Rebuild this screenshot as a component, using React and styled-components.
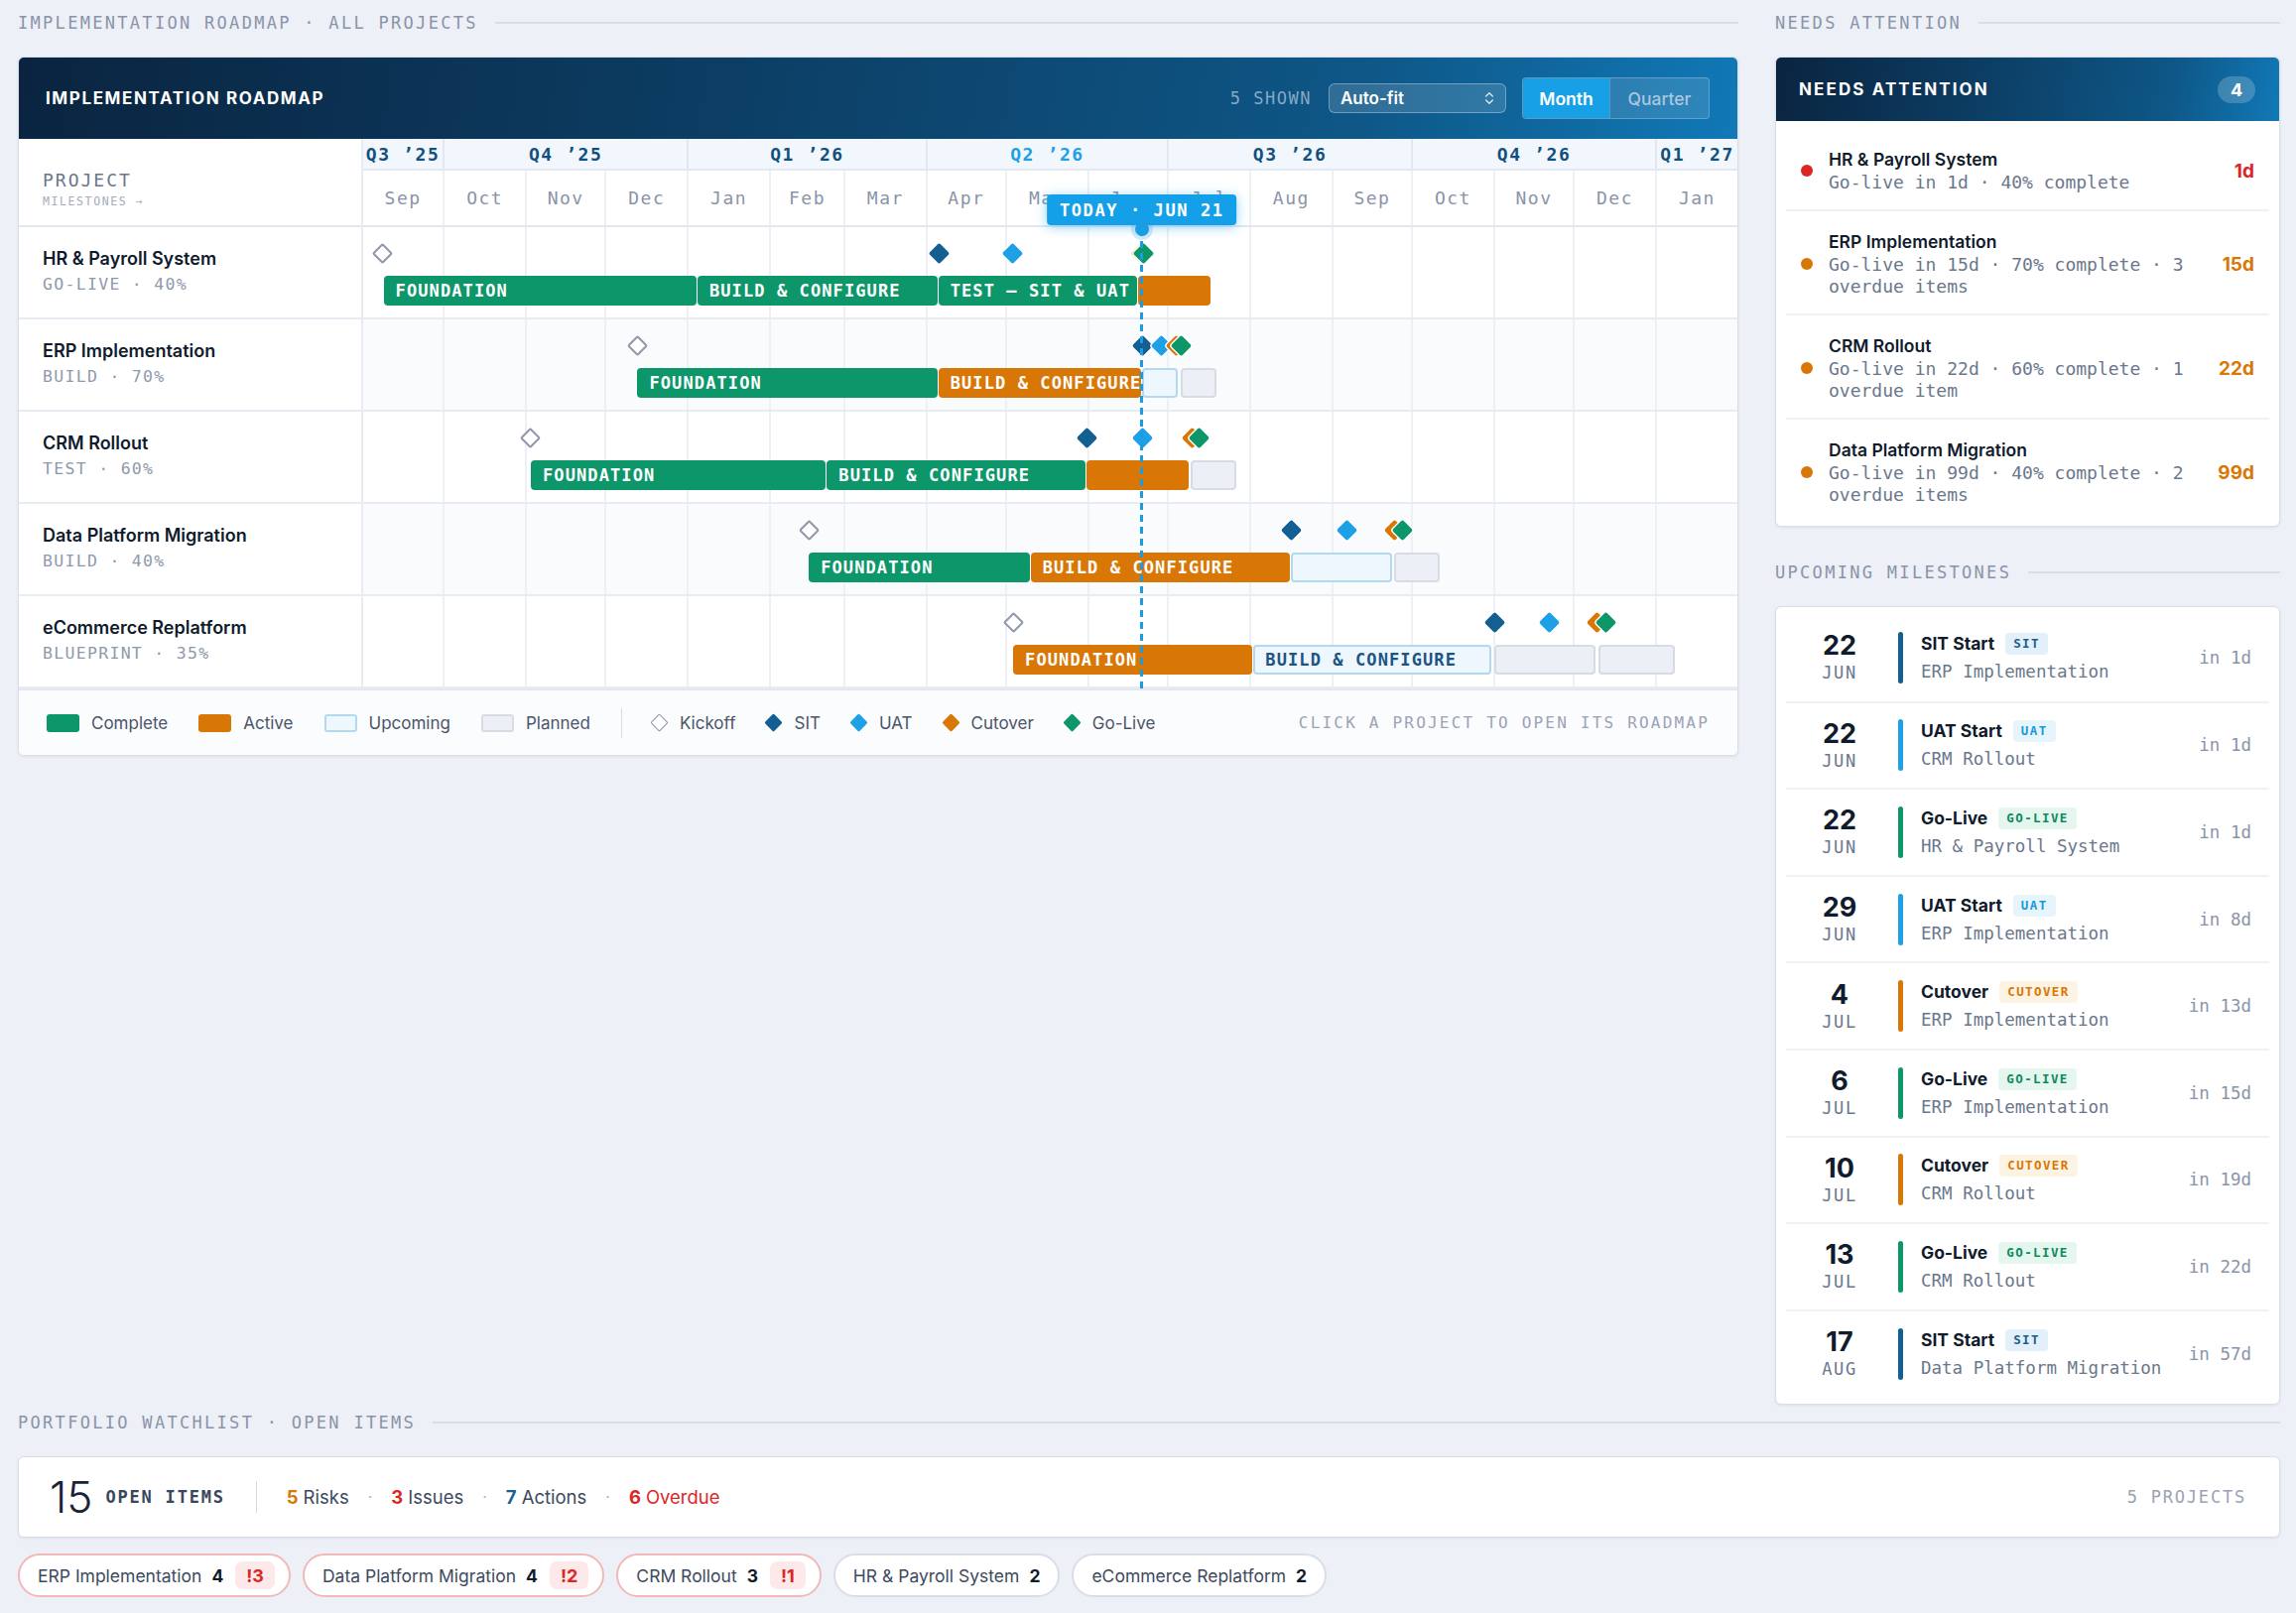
import React from 'react';
import styled, { createGlobalStyle } from 'styled-components';
import { ChevronsUpDown } from 'lucide-react';

const SANS = `Inter, "Noto Sans", "Liberation Sans", sans-serif`;
const MONO = `"DejaVu Sans Mono", "Liberation Mono", monospace`;

const GlobalStyle = createGlobalStyle`
  html, body { margin: 0; padding: 0; background: #edf0f7; }
  * { box-sizing: border-box; }
`;

const TOTAL = 518;
const TODAY = 293.5;
const pct = (d) => (d / TOTAL) * 100;

const MONTHS = [
  ['Sep', 30], ['Oct', 31], ['Nov', 30], ['Dec', 31], ['Jan', 31], ['Feb', 28], ['Mar', 31],
  ['Apr', 30], ['May', 31], ['Jun', 30], ['Jul', 31], ['Aug', 31], ['Sep', 30], ['Oct', 31],
  ['Nov', 30], ['Dec', 31], ['Jan', 31],
];
const QUARTERS = [
  ['Q3 ’25', 30], ['Q4 ’25', 92], ['Q1 ’26', 90], ['Q2 ’26', 91, true],
  ['Q3 ’26', 92], ['Q4 ’26', 92], ['Q1 ’27', 31],
];

const MS_COLOR = { sit: '#135f91', uat: '#1ea0e6', cutover: '#d97706', golive: '#0d9669' };

const PROJECTS = [
  {
    name: 'HR & Payroll System', sub: 'GO-LIVE · 40%', kickoff: 7.3,
    bars: [[7.7, 126, 'complete', 'Foundation'], [126, 216.8, 'complete', 'Build & Configure'],
      [216.8, 292, 'complete', 'Test — SIT & UAT'], [292, 319.6, 'active', '']],
    ms: [['sit', 217.2], ['uat', 244.8], ['cutover', 293.4], ['golive', 294]],
  },
  {
    name: 'ERP Implementation', sub: 'BUILD · 70%', kickoff: 103.4,
    bars: [[103.4, 216.8, 'complete', 'Foundation'], [216.8, 293.5, 'active', 'Build & Configure'],
      [293.5, 307.6, 'upcoming', ''], [308, 322.2, 'planned', '']],
    ms: [['sit', 293.7], ['uat', 300.8], ['cutover', 306.4], ['golive', 308.2]],
  },
  {
    name: 'CRM Rollout', sub: 'TEST · 60%', kickoff: 63.2,
    bars: [[63.2, 174.8, 'complete', 'Foundation'], [174.8, 272.6, 'complete', 'Build & Configure'],
      [272.6, 311.6, 'active', ''], [312, 329.4, 'planned', '']],
    ms: [['sit', 272.8], ['uat', 293.8], ['cutover', 312.3], ['golive', 315]],
  },
  {
    name: 'Data Platform Migration', sub: 'BUILD · 40%', kickoff: 168,
    bars: [[168, 251.6, 'complete', 'Foundation'], [251.6, 349.6, 'active', 'Build & Configure'],
      [349.8, 388.2, 'upcoming', ''], [388.6, 406.2, 'planned', '']],
    ms: [['sit', 350], ['uat', 370.8], ['cutover', 388.6], ['golive', 391.6]],
  },
  {
    name: 'eCommerce Replatform', sub: 'BLUEPRINT · 35%', kickoff: 245,
    bars: [[245, 335.6, 'active', 'Foundation'], [335.6, 425.8, 'upcoming', 'Build & Configure'],
      [426.4, 465, 'planned', ''], [465.6, 494.8, 'planned', '']],
    ms: [['sit', 426.4], ['uat', 447.2], ['cutover', 465], ['golive', 468.4]],
  },
];

const ATTENTION = [
  { name: 'HR & Payroll System', sub: 'Go-live in 1d · 40% complete', days: '1d', tone: '#dc2626' },
  { name: 'ERP Implementation', sub: 'Go-live in 15d · 70% complete · 3 overdue items', days: '15d', tone: '#d97706' },
  { name: 'CRM Rollout', sub: 'Go-live in 22d · 60% complete · 1 overdue item', days: '22d', tone: '#d97706' },
  { name: 'Data Platform Migration', sub: 'Go-live in 99d · 40% complete · 2 overdue items', days: '99d', tone: '#d97706' },
];

const UPCOMING = [
  ['22', 'JUN', 'SIT Start', 'sit', 'ERP Implementation', 'in 1d'],
  ['22', 'JUN', 'UAT Start', 'uat', 'CRM Rollout', 'in 1d'],
  ['22', 'JUN', 'Go-Live', 'golive', 'HR & Payroll System', 'in 1d'],
  ['29', 'JUN', 'UAT Start', 'uat', 'ERP Implementation', 'in 8d'],
  ['4', 'JUL', 'Cutover', 'cutover', 'ERP Implementation', 'in 13d'],
  ['6', 'JUL', 'Go-Live', 'golive', 'ERP Implementation', 'in 15d'],
  ['10', 'JUL', 'Cutover', 'cutover', 'CRM Rollout', 'in 19d'],
  ['13', 'JUL', 'Go-Live', 'golive', 'CRM Rollout', 'in 22d'],
  ['17', 'AUG', 'SIT Start', 'sit', 'Data Platform Migration', 'in 57d'],
];

const TAGS = {
  sit: { label: 'SIT', bg: '#e3f0fa', fg: '#17608f' },
  uat: { label: 'UAT', bg: '#e6f4fc', fg: '#1a9ad9' },
  golive: { label: 'GO-LIVE', bg: '#e4f6ee', fg: '#0d8a5f' },
  cutover: { label: 'CUTOVER', bg: '#fdf3e2', fg: '#d97706' },
};

const CHIPS = [
  ['ERP Implementation', 4, 3], ['Data Platform Migration', 4, 2], ['CRM Rollout', 3, 1],
  ['HR & Payroll System', 2, 0], ['eCommerce Replatform', 2, 0],
];

/* ---------- page shell ---------- */

const Page = styled.div`
  width: 2314px;
  min-height: 1626px;
  padding: 5px 16px 15px 18px;
  font-family: ${SANS};
  color: #0f1b2d;
`;

const TopGrid = styled.div`
  display: grid;
  grid-template-columns: 1fr 509px;
  column-gap: 37px;
  align-items: start;
`;

const Column = styled.div`
  display: flex;
  flex-direction: column;
`;

const SectionHead = styled.div`
  display: flex;
  align-items: center;
  gap: 17px;
  height: 36px;
  margin: ${p => p.$top || 0}px 0 16px;
  font-family: ${MONO};
  font-size: 17px;
  letter-spacing: 2.3px;
  color: #8a94a8;
  white-space: nowrap;
  &::after {
    content: '';
    flex: 1;
    height: 2px;
    background: #d8dde7;
  }
`;

const Card = styled.div`
  background: #fff;
  border: 1px solid #d9dee8;
  border-radius: 6px;
  box-shadow: 0 1px 3px rgba(16, 32, 60, 0.08);
  overflow: hidden;
`;

const DarkHeader = styled.div`
  display: flex;
  align-items: center;
  justify-content: space-between;
  height: ${p => p.$h}px;
  padding: ${p => p.$pad};
  background: linear-gradient(100deg, #0a2440 0%, #0c3d63 40%, #0e5787 78%, #1179b7 100%);
  color: #fff;
`;

const HeaderTitle = styled.div`
  font-weight: 700;
  font-size: 17px;
  letter-spacing: ${p => p.$ls || 1.6}px;
`;

/* ---------- roadmap header controls ---------- */

const Controls = styled.div`
  display: flex;
  align-items: center;
`;

const ShownCount = styled.span`
  font-family: ${MONO};
  font-size: 17px;
  letter-spacing: 1.5px;
  color: #86a9c7;
  margin-right: 17px;
`;

const Select = styled.div`
  width: 179px;
  height: 30px;
  display: flex;
  align-items: center;
  justify-content: space-between;
  padding: 0 8px 0 11px;
  border: 1px solid rgba(190, 215, 240, 0.45);
  border-radius: 6px;
  background: rgba(255, 255, 255, 0.14);
  font-size: 17px;
  font-weight: 600;
  color: #fff;
  margin-right: 16px;
`;

const Segmented = styled.div`
  display: flex;
  height: 42px;
  border: 1px solid rgba(190, 215, 240, 0.35);
  border-radius: 4px;
  overflow: hidden;
  background: rgba(255, 255, 255, 0.12);
`;

const SegButton = styled.div`
  display: flex;
  align-items: center;
  justify-content: center;
  width: ${p => p.$w}px;
  font-size: 17.5px;
  font-weight: ${p => (p.$active ? 600 : 500)};
  color: ${p => (p.$active ? '#fff' : '#a9c7df')};
  background: ${p => (p.$active ? '#18a0e6' : 'transparent')};
  & + & { border-left: 1px solid rgba(190, 215, 240, 0.3); }
`;

/* ---------- chart ---------- */

const Chart = styled.div`
  display: flex;
`;

const LabelCol = styled.div`
  width: 347px;
  flex: none;
  border-right: 2px solid #e8ebf2;
`;

const LabelHead = styled.div`
  height: 89px;
  border-bottom: 2px solid #e3e7ef;
  padding: 14px 0 0 24px;
  display: flex;
  flex-direction: column;
  justify-content: center;
  gap: 4px;
`;

const LabelHeadMain = styled.div`
  font-family: ${MONO};
  font-size: 18px;
  letter-spacing: 2px;
  color: #6b778c;
  font-weight: 500;
`;

const LabelHeadSub = styled.div`
  font-family: ${MONO};
  font-size: 11.5px;
  letter-spacing: 1.6px;
  color: #a3acbc;
`;

const ProjectLabel = styled.div`
  height: 93px;
  border-bottom: 2px solid #e8ebf2;
  padding: 19px 0 0 24px;
  cursor: pointer;
`;

const ProjectName = styled.div`
  font-size: 18px;
  font-weight: 600;
  color: #101b2c;
  line-height: 26px;
`;

const ProjectSub = styled.div`
  font-family: ${MONO};
  font-size: 16.5px;
  letter-spacing: 1.3px;
  color: #8f99ab;
  line-height: 26px;
`;

const TimelineCol = styled.div`
  flex: 1;
  position: relative;
`;

const QuarterRow = styled.div`
  display: flex;
  height: 32px;
  background: #f1f7fd;
  border-bottom: 2px solid #e3e7ef;
`;

const QuarterCell = styled.div`
  flex: 0 0 ${p => pct(p.$days)}%;
  display: flex;
  align-items: center;
  justify-content: center;
  border-left: ${p => (p.$first ? 'none' : '2px solid #e3e8f0')};
  font-family: ${MONO};
  font-size: 18px;
  font-weight: 600;
  letter-spacing: 1.6px;
  color: ${p => (p.$current ? '#1ea0e6' : '#11507d')};
  white-space: nowrap;
`;

const MonthRow = styled.div`
  display: flex;
  height: 57px;
  border-bottom: 2px solid #e3e7ef;
`;

const MonthCell = styled.div`
  flex: 0 0 ${p => pct(p.$days)}%;
  display: flex;
  align-items: center;
  justify-content: center;
  border-left: ${p => (p.$first ? 'none' : '2px solid #edf0f5')};
  font-family: ${MONO};
  font-size: 18px;
  letter-spacing: 1.5px;
  color: #8a94a8;
`;

const Track = styled.div`
  position: relative;
  height: 93px;
  border-bottom: 2px solid #e8ebf2;
  background: ${p => (p.$alt ? '#f9fbfd' : '#fff')};
`;

const GridLayer = styled.div`
  position: absolute;
  inset: 0;
  display: flex;
`;

const GridCell = styled.div`
  flex: 0 0 ${p => pct(p.$days)}%;
  border-left: ${p => (p.$first ? 'none' : '2px solid #edf0f5')};
`;

const BAR_STYLES = {
  complete: 'background:#0d9669; color:#fff;',
  active: 'background:#d97706; color:#fff;',
  upcoming: 'background:#eef7fd; border:2px solid #b3d9ef; color:#1b5485;',
  planned: 'background:#eceff6; border:2px solid #d6dbe5; color:#6b778c;',
};

const Bar = styled.div`
  position: absolute;
  top: 49px;
  height: 30px;
  border-radius: 4px;
  display: flex;
  align-items: center;
  padding-left: ${p => (p.$kind === 'upcoming' ? 10 : 12)}px;
  overflow: hidden;
  white-space: nowrap;
  font-family: ${MONO};
  font-size: 17px;
  font-weight: 600;
  letter-spacing: 1.1px;
  text-transform: uppercase;
  ${p => BAR_STYLES[p.$kind]}
`;

const Diamond = styled.div`
  position: absolute;
  top: 19px;
  width: 15px;
  height: 15px;
  margin-left: -7.5px;
  transform: rotate(45deg);
  border-radius: 2px;
  background: ${p => (p.$kind === 'kickoff' ? '#fff' : MS_COLOR[p.$kind])};
  border: ${p => (p.$kind === 'kickoff' ? '2px solid #8f99ab' : 'none')};
  box-shadow: ${p => (p.$kind === 'kickoff' ? 'none' : '0 0 0 1.5px rgba(255,255,255,0.95)')};
  z-index: 2;
`;

const TodayLine = styled.div`
  position: absolute;
  top: 91px;
  bottom: 0;
  width: 3px;
  margin-left: -1.5px;
  background: repeating-linear-gradient(to bottom, #1b9be0 0 7px, transparent 7px 12px);
  z-index: 3;
  pointer-events: none;
`;

const TodayBadge = styled.div`
  position: absolute;
  top: 56px;
  transform: translateX(-50%);
  height: 31px;
  padding: 0 13px;
  display: flex;
  align-items: center;
  border-radius: 4px;
  background: #14a0e8;
  color: #fff;
  font-family: ${MONO};
  font-size: 17px;
  font-weight: 700;
  letter-spacing: 1.6px;
  white-space: nowrap;
  box-shadow: 0 2px 12px rgba(20, 160, 232, 0.45);
  z-index: 5;
`;

const TodayDot = styled.div`
  position: absolute;
  top: 84px;
  width: 14px;
  height: 14px;
  margin-left: -7px;
  border-radius: 50%;
  background: #1b9de3;
  box-shadow: 0 0 0 4px rgba(27, 157, 227, 0.2);
  z-index: 5;
`;

/* ---------- legend ---------- */

const Legend = styled.div`
  display: flex;
  align-items: center;
  height: 67px;
  padding: 0 28px;
  border-top: 2px solid #e3e7ef;
  background: #fbfcfe;
  font-size: 17px;
  color: #4a5568;
`;

const LegendItem = styled.div`
  display: flex;
  align-items: center;
  gap: ${p => p.$gap || 12}px;
  margin-right: ${p => p.$mr || 31}px;
`;

const Swatch = styled.span`
  width: 33px;
  height: 18px;
  border-radius: 3px;
  ${p => BAR_STYLES[p.$kind]}
`;

const LegendDiamond = styled.span`
  width: 13px;
  height: 13px;
  margin: 0 2px;
  transform: rotate(45deg);
  border-radius: 1.5px;
  background: ${p => (p.$kind === 'kickoff' ? '#fff' : MS_COLOR[p.$kind])};
  border: ${p => (p.$kind === 'kickoff' ? '1.5px solid #8f99ab' : 'none')};
`;

const LegendDivider = styled.span`
  width: 1px;
  height: 30px;
  background: #d6dbe5;
  margin-right: 29px;
`;

const LegendHint = styled.span`
  margin-left: auto;
  font-family: ${MONO};
  font-size: 16px;
  letter-spacing: 2.2px;
  color: #9aa3b5;
`;

/* ---------- needs attention ---------- */

const CountPill = styled.div`
  min-width: 38px;
  height: 27px;
  border-radius: 14px;
  background: rgba(255, 255, 255, 0.2);
  display: flex;
  align-items: center;
  justify-content: center;
  font-size: 18px;
  font-weight: 700;
`;

const ItemList = styled.div`
  padding: ${p => p.$pad};
`;

const AttnItem = styled.div`
  display: flex;
  align-items: center;
  padding: 19px 15px 16px;
  & + & { border-top: 2px solid #eef1f6; }
`;

const Dot = styled.span`
  width: 12px;
  height: 12px;
  border-radius: 50%;
  flex: none;
  background: ${p => p.$c};
  margin-right: 16px;
`;

const AttnText = styled.div`
  flex: 1;
  min-width: 0;
  margin-right: 20px;
`;

const AttnName = styled.div`
  font-size: 17.5px;
  font-weight: 600;
  line-height: 24px;
  color: #101b2c;
`;

const AttnSub = styled.div`
  font-family: ${MONO};
  font-size: 18px;
  line-height: 22px;
  color: #6b778c;
`;

const AttnDays = styled.div`
  font-size: 19px;
  font-weight: 700;
  color: ${p => p.$c};
`;

/* ---------- upcoming milestones ---------- */

const MsItem = styled.div`
  display: flex;
  align-items: center;
  height: 87.6px;
  padding-right: 18px;
  & + & { border-top: 2px solid #eef1f6; }
`;

const DateCol = styled.div`
  width: 108px;
  flex: none;
  display: flex;
  flex-direction: column;
  align-items: center;
`;

const DayNum = styled.div`
  font-size: 27px;
  font-weight: 700;
  line-height: 31px;
  color: #101b2c;
`;

const MonthAbbr = styled.div`
  font-family: ${MONO};
  font-size: 17px;
  letter-spacing: 1.6px;
  line-height: 24px;
  color: #6b778c;
  font-weight: 500;
`;

const MsBar = styled.span`
  width: 5px;
  height: 52px;
  border-radius: 3px;
  flex: none;
  background: ${p => MS_COLOR[p.$kind]};
  margin: 0 18px 0 5px;
`;

const MsBody = styled.div`
  flex: 1;
  min-width: 0;
`;

const MsTitleRow = styled.div`
  display: flex;
  align-items: center;
  gap: 11px;
  line-height: 28px;
`;

const MsTitle = styled.span`
  font-size: 17.5px;
  font-weight: 700;
  color: #101b2c;
`;

const Tag = styled.span`
  height: 22px;
  padding: 0 8px;
  display: inline-flex;
  align-items: center;
  border-radius: 4px;
  font-family: ${MONO};
  font-size: 12.5px;
  font-weight: 700;
  letter-spacing: 1.4px;
  background: ${p => p.$bg};
  color: ${p => p.$fg};
`;

const MsProject = styled.div`
  font-family: ${MONO};
  font-size: 17.5px;
  line-height: 28px;
  color: #6b778c;
`;

const MsWhen = styled.div`
  font-family: ${MONO};
  font-size: 17.5px;
  color: #8a94a8;
  font-weight: 500;
`;

/* ---------- watchlist ---------- */

const SummaryCard = styled(Card)`
  display: flex;
  align-items: center;
  height: 82px;
  padding: 0 33px 0 31px;
`;

const BigCount = styled.span`
  font-size: 44px;
  font-weight: 300;
  color: #1a2436;
  margin-right: 13px;
`;

const OpenLabel = styled.span`
  font-family: ${MONO};
  font-size: 17px;
  font-weight: 600;
  letter-spacing: 1.8px;
  color: #3a475b;
`;

const VDivider = styled.span`
  width: 1px;
  height: 32px;
  background: #d6dbe5;
  margin: 0 30px 0 31px;
`;

const Stat = styled.span`
  font-size: 18.5px;
  color: ${p => (p.$all ? p.$c : '#3d4a5e')};
  b { font-weight: 700; color: ${p => p.$c}; margin-right: 5px; }
`;

const StatSep = styled.span`
  color: #aab2c0;
  margin: 0 19px;
`;

const ProjectsCount = styled.span`
  margin-left: auto;
  font-family: ${MONO};
  font-size: 17px;
  letter-spacing: 1.8px;
  color: #9aa3b5;
`;

const ChipRow = styled.div`
  display: flex;
  gap: 12px;
  margin-top: 16px;
`;

const Chip = styled.div`
  display: flex;
  align-items: center;
  height: 44px;
  padding: 0 ${p => (p.$hot ? 14 : 18)}px 0 18px;
  border-radius: 22px;
  background: #fff;
  border: 2px solid ${p => (p.$hot ? '#f2b8b8' : '#d9dde8')};
  font-size: 17.5px;
  color: #3d4a5e;
`;

const ChipCount = styled.b`
  margin-left: 10px;
  color: #101b2c;
  font-weight: 700;
`;

const OverdueBadge = styled.span`
  margin-left: 12px;
  height: 28px;
  padding: 0 11px;
  display: inline-flex;
  align-items: center;
  border-radius: 7px;
  background: #fde9e9;
  color: #dc2626;
  font-weight: 700;
  font-size: 18px;
`;

function MonthGrid() {
  return (
    <GridLayer>
      {MONTHS.map(([m, d], i) => <GridCell key={i} $days={d} $first={i === 0} />)}
    </GridLayer>
  );
}

function RoadmapCard() {
  return (
    <Card>
      <DarkHeader $h={82} $pad="0 28px 0 27px">
        <HeaderTitle>IMPLEMENTATION ROADMAP</HeaderTitle>
        <Controls>
          <ShownCount>5 SHOWN</ShownCount>
          <Select>
            Auto-fit
            <ChevronsUpDown size={16} color="#dbe8f4" strokeWidth={2} />
          </Select>
          <Segmented>
            <SegButton $active $w={87}>Month</SegButton>
            <SegButton $w={100}>Quarter</SegButton>
          </Segmented>
        </Controls>
      </DarkHeader>
      <Chart>
        <LabelCol>
          <LabelHead>
            <LabelHeadMain>PROJECT</LabelHeadMain>
            <LabelHeadSub>MILESTONES →</LabelHeadSub>
          </LabelHead>
          {PROJECTS.map(p => (
            <ProjectLabel key={p.name}>
              <ProjectName>{p.name}</ProjectName>
              <ProjectSub>{p.sub}</ProjectSub>
            </ProjectLabel>
          ))}
        </LabelCol>
        <TimelineCol>
          <QuarterRow>
            {QUARTERS.map(([q, d, cur], i) => (
              <QuarterCell key={q} $days={d} $current={cur} $first={i === 0}>{q}</QuarterCell>
            ))}
          </QuarterRow>
          <MonthRow>
            {MONTHS.map(([m, d], i) => (
              <MonthCell key={i} $days={d} $first={i === 0}>{m}</MonthCell>
            ))}
          </MonthRow>
          {PROJECTS.map((p, ri) => (
            <Track key={p.name} $alt={ri % 2 === 1}>
              <MonthGrid />
              <Diamond $kind="kickoff" style={{ left: `${pct(p.kickoff)}%` }} />
              {p.bars.map(([s, e, kind, label], i) => (
                <Bar key={i} $kind={kind} style={{ left: `${pct(s)}%`, width: `calc(${pct(e - s)}% - 1px)` }}>
                  {label}
                </Bar>
              ))}
              {p.ms.map(([kind, d]) => (
                <Diamond key={kind} $kind={kind} style={{ left: `${pct(d)}%` }} />
              ))}
            </Track>
          ))}
          <TodayBadge style={{ left: `${pct(TODAY)}%` }}>TODAY · JUN 21</TodayBadge>
          <TodayDot style={{ left: `${pct(TODAY)}%` }} />
          <TodayLine style={{ left: `${pct(TODAY)}%` }} />
        </TimelineCol>
      </Chart>
      <Legend>
        <LegendItem><Swatch $kind="complete" />Complete</LegendItem>
        <LegendItem><Swatch $kind="active" />Active</LegendItem>
        <LegendItem><Swatch $kind="upcoming" />Upcoming</LegendItem>
        <LegendItem><Swatch $kind="planned" />Planned</LegendItem>
        <LegendDivider />
        <LegendItem $gap={12} $mr={30}><LegendDiamond $kind="kickoff" />Kickoff</LegendItem>
        <LegendItem $gap={12} $mr={30}><LegendDiamond $kind="sit" />SIT</LegendItem>
        <LegendItem $gap={12} $mr={30}><LegendDiamond $kind="uat" />UAT</LegendItem>
        <LegendItem $gap={12} $mr={30}><LegendDiamond $kind="cutover" />Cutover</LegendItem>
        <LegendItem $gap={12} $mr={30}><LegendDiamond $kind="golive" />Go-Live</LegendItem>
        <LegendHint>CLICK A PROJECT TO OPEN ITS ROADMAP</LegendHint>
      </Legend>
    </Card>
  );
}

function NeedsAttention() {
  return (
    <Card>
      <DarkHeader $h={64} $pad="0 24px 0 23px">
        <HeaderTitle $ls={2.1}>NEEDS ATTENTION</HeaderTitle>
        <CountPill>4</CountPill>
      </DarkHeader>
      <ItemList $pad="8px 10px 4px">
        {ATTENTION.map(a => (
          <AttnItem key={a.name}>
            <Dot $c={a.tone} />
            <AttnText>
              <AttnName>{a.name}</AttnName>
              <AttnSub>{a.sub}</AttnSub>
            </AttnText>
            <AttnDays $c={a.tone}>{a.days}</AttnDays>
          </AttnItem>
        ))}
      </ItemList>
    </Card>
  );
}

function UpcomingMilestones() {
  return (
    <Card>
      <ItemList $pad="7px 10px 8px">
        {UPCOMING.map(([day, mon, title, kind, project, when], i) => (
          <MsItem key={i}>
            <DateCol>
              <DayNum>{day}</DayNum>
              <MonthAbbr>{mon}</MonthAbbr>
            </DateCol>
            <MsBar $kind={kind} />
            <MsBody>
              <MsTitleRow>
                <MsTitle>{title}</MsTitle>
                <Tag $bg={TAGS[kind].bg} $fg={TAGS[kind].fg}>{TAGS[kind].label}</Tag>
              </MsTitleRow>
              <MsProject>{project}</MsProject>
            </MsBody>
            <MsWhen>{when}</MsWhen>
          </MsItem>
        ))}
      </ItemList>
    </Card>
  );
}

function Watchlist() {
  return (
    <>
      <SectionHead>PORTFOLIO WATCHLIST · OPEN ITEMS</SectionHead>
      <SummaryCard>
        <BigCount>15</BigCount>
        <OpenLabel>OPEN ITEMS</OpenLabel>
        <VDivider />
        <Stat $c="#d97706"><b>5</b>Risks</Stat>
        <StatSep>·</StatSep>
        <Stat $c="#dc2626"><b>3</b>Issues</Stat>
        <StatSep>·</StatSep>
        <Stat $c="#1d5f91"><b>7</b>Actions</Stat>
        <StatSep>·</StatSep>
        <Stat $c="#dc2626" $all><b>6</b>Overdue</Stat>
        <ProjectsCount>5 PROJECTS</ProjectsCount>
      </SummaryCard>
      <ChipRow>
        {CHIPS.map(([name, count, overdue]) => (
          <Chip key={name} $hot={overdue > 0}>
            {name}
            <ChipCount>{count}</ChipCount>
            {overdue > 0 && <OverdueBadge>!{overdue}</OverdueBadge>}
          </Chip>
        ))}
      </ChipRow>
    </>
  );
}

export default function App() {
  return (
    <Page>
      <GlobalStyle />
      <TopGrid>
        <Column>
          <SectionHead>IMPLEMENTATION ROADMAP · ALL PROJECTS</SectionHead>
          <RoadmapCard />
        </Column>
        <Column>
          <SectionHead>NEEDS ATTENTION</SectionHead>
          <NeedsAttention />
          <SectionHead $top={28}>UPCOMING MILESTONES</SectionHead>
          <UpcomingMilestones />
        </Column>
      </TopGrid>
      <Watchlist />
    </Page>
  );
}
